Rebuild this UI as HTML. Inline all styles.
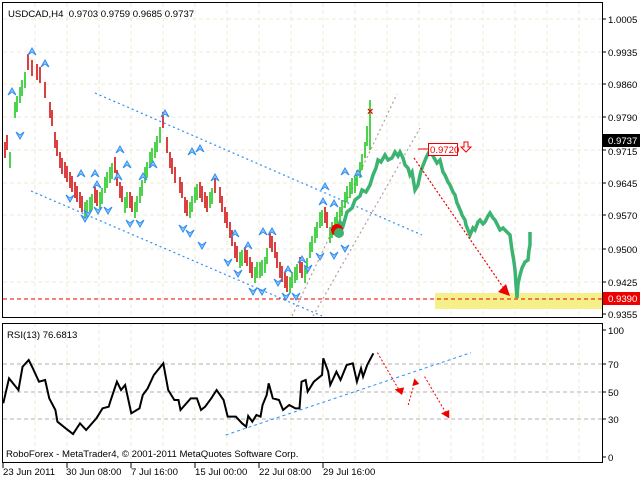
<!DOCTYPE html>
<html><head><style>
body{margin:0;background:#fff;width:640px;height:480px;overflow:hidden;font-family:"Liberation Sans",sans-serif}
svg{position:absolute;left:0;top:0}
text{font-family:"Liberation Sans",sans-serif;font-size:9.6px;fill:#000}
</style></head><body>
<svg width="640" height="480" viewBox="0 0 640 480">
<defs>
<g id="u"><path d="M-4,5 L0,-2 L4,5 L0,2Z" fill="#9cc9ff" stroke="#2f8df0" stroke-width="1"/></g>
<g id="d"><path d="M-4,-5 L0,2 L4,-5 L0,-2Z" fill="#9cc9ff" stroke="#2f8df0" stroke-width="1"/></g>
</defs>
<g stroke="#ecebd6" stroke-dasharray="4,3" stroke-width="1">
<path d="M35 3V317M67 3V317M99 3V317M131 3V317M163 3V317M195 3V317M227 3V317M259 3V317M291 3V317M323 3V317M355 3V317M387 3V317M419 3V317M451 3V317M483 3V317M515 3V317M547 3V317M579 3V317"/>
<path d="M3 19H602M3 52H602M3 84H602M3 117H602M3 150H602M3 183H602M3 215H602M3 249H602M3 282H602"/>
<path d="M35 323V462M67 323V462M99 323V462M131 323V462M163 323V462M195 323V462M227 323V462M259 323V462M291 323V462M323 323V462M355 323V462M387 323V462M419 323V462M451 323V462M483 323V462M515 323V462M547 323V462M579 323V462"/>
</g>
<g stroke="#b0b0b0" stroke-dasharray="4,3"><path d="M3 364H602M3 392H602M3 419H602"/></g>
<rect x="435" y="293" width="167" height="16" fill="#f5f08a"/>
<path d="M3 299H602" stroke="#e00" stroke-dasharray="4,3"/>
<g stroke="#2f8df0" stroke-dasharray="2,3" stroke-width="1.2" fill="none">
<path d="M95 93L422 235"/><path d="M31 191L322 316"/>
</g>
<g stroke="#b89a9a" stroke-dasharray="2,3" stroke-width="1.2" fill="none">
<path d="M292 316L397 94"/><path d="M313 316L420 128"/>
</g>
<path stroke="#d41010" stroke-width="1.6" d="M5 142V158M28 54V70M32 60V76M40 67V83M45 82V98M50 102V118M55 132V148M60 152V168M65 162V178M70 172V188M75 182V198M80 192V208M95 187V203M115 157V173M120 182V198M130 192V208M163 112V128M167 137V153M170 152V168M175 167V183M180 177V193M185 197V213M200 182V198M205 192V208M215 177V193M220 187V203M225 207V223M230 222V238M235 242V258M245 247V263M250 257V273M270 232V248M275 242V258M280 262V278M285 272V288M300 257V273M325 207V223 M7 135V150M37 64V80M52 110V126M62 158V174M72 176V192M82 196V212M122 186V202M172 158V174M182 182V198M227 212V228M237 246V262M252 262V278M282 266V282M57 140V156M67 166V182M77 186V202M97 190V206M117 170V186M132 196V212M187 200V216M202 186V202M207 196V212M222 196V212M232 230V246M247 250V266M272 236V252M277 252V268M287 276V292M302 262V278M327 212V228"/>
<path stroke="#22c822" stroke-width="1.6" d="M10 152V168M15 102V118M20 87V103M25 72V88M85 202V218M90 197V213M100 192V208M105 177V193M110 167V183M125 197V213M135 202V218M140 187V203M145 167V183M150 152V168M155 142V158M160 127V143M190 202V218M195 187V203M210 192V208M240 252V268M255 267V283M260 262V278M265 257V273M290 277V293M295 267V283M305 267V283M310 242V258M315 227V243M320 212V228M330 227V243M335 217V233M340 207V223M345 192V208M350 182V198M355 177V193M360 162V178M365 142V158M370 100V150M17 96V112M22 80V96M92 194V210M102 188V204M107 172V188M112 163V179M142 180V196M147 162V178M152 148V164M157 136V152M192 196V212M262 260V276M297 264V280M312 236V252M317 222V238M337 212V228M342 200V216M352 178V194M362 154V170M87 200V216M127 192V208M137 196V212M197 184V200M212 188V204M242 250V266M257 262V278M267 248V264M292 272V288M307 258V274M322 210V226M332 222V238M347 186V202M357 170V186M367 126V146"/>
<polyline fill="none" stroke="#3cb371" stroke-width="3.5" stroke-linejoin="miter" points="335,232 340,222 343,226 347,212 352,208 355,200 360,196 362,190 366,192 370,185 373,175 376,168 378,160 381,162 385,155 388,160 392,158 395,152 398,156 400,152 403,158 405,165 408,168 410,175 412,172 415,190 418,185 420,175 422,168 426,158 430,150 433,156 437,163 440,160 443,172 445,175 448,182 450,185 453,192 455,195 457,203 458,205 461,212 462,215 465,220 466,225 468,230 470,235 473,228 475,230 478,222 480,220 483,224 485,222 488,216 490,213 493,218 495,220 498,226 500,230 503,228 505,230 508,233 510,235 511,243 512,250 514,262 515,270 516,285 517,298 518,284 520,275 522,268 525,262 528,260 529,250 530,245 530,232"/>
<circle cx="337" cy="230" r="6" fill="#e00"/><circle cx="339" cy="233" r="5" fill="#3cb371"/>
<path d="M414 158L505 290" stroke="#e00" stroke-dasharray="2,2" stroke-width="1.2"/>
<path d="M510 296L498 292L506 284Z" fill="#e00"/>
<text x="367" y="115" style="fill:#e00;font-weight:bold;font-size:11px">×</text>
<path d="M418 149H428" stroke="#e00"/>
<rect x="428.5" y="143.5" width="29" height="12" fill="#fff" stroke="#e00"/>
<text x="430" y="153" style="fill:#e00">0.9720</text>
<path d="M464 142h4v5h3l-5,5l-5,-5h3z" fill="#fff" stroke="#e00"/>
<g>
<use href="#u" x="32" y="50"/><use href="#u" x="45" y="62"/><use href="#u" x="12" y="90"/><use href="#u" x="165" y="112"/><use href="#u" x="120" y="148"/><use href="#u" x="127" y="163"/><use href="#u" x="153" y="163"/><use href="#u" x="118" y="175"/><use href="#u" x="95" y="172"/><use href="#u" x="143" y="175"/><use href="#u" x="200" y="147"/><use href="#u" x="192" y="150"/><use href="#u" x="215" y="176"/><use href="#u" x="235" y="232"/><use href="#u" x="263" y="230"/><use href="#u" x="272" y="230"/><use href="#u" x="248" y="244"/><use href="#u" x="302" y="258"/><use href="#u" x="288" y="268"/><use href="#u" x="325" y="185"/><use href="#u" x="323" y="200"/><use href="#u" x="345" y="170"/><use href="#u" x="358" y="172"/><use href="#u" x="334" y="202"/><use href="#u" x="81" y="172"/><use href="#u" x="97" y="183"/>
<use href="#d" x="20" y="137"/><use href="#d" x="70" y="200"/><use href="#d" x="85" y="220"/><use href="#d" x="98" y="212"/><use href="#d" x="108" y="212"/><use href="#d" x="130" y="225"/><use href="#d" x="140" y="225"/><use href="#d" x="183" y="230"/><use href="#d" x="190" y="235"/><use href="#d" x="202" y="247"/><use href="#d" x="228" y="264"/><use href="#d" x="238" y="275"/><use href="#d" x="253" y="293"/><use href="#d" x="262" y="293"/><use href="#d" x="278" y="284"/><use href="#d" x="286" y="298"/><use href="#d" x="296" y="298"/><use href="#d" x="308" y="270"/><use href="#d" x="320" y="258"/><use href="#d" x="334" y="257"/><use href="#d" x="345" y="250"/><use href="#d" x="88" y="215"/>
</g>
<g transform="translate(0,310) scale(0.41026,0.33333)" fill="none">
<polyline stroke="#000" stroke-width="2" vector-effect="non-scaling-stroke" points="8,280 22,205 35,225 45,240 55,170 70,150 80,175 95,215 110,210 120,265 135,300 140,335 160,355 178,372 195,340 210,360 235,325 250,295 265,290 270,270 285,215 295,240 305,225 320,310 340,295 348,255 360,235 375,195 398,160 410,240 425,270 435,270 440,300 465,265 480,265 490,300 500,290 515,265 528,240 545,270 555,320 575,320 590,340 600,350 605,318 615,335 625,315 635,320 640,285 650,255 655,220 665,265 680,270 690,300 705,285 720,295 730,295 735,215 745,210 750,245 765,215 775,205 785,195 788,145 800,185 805,225 820,185 830,210 845,165 860,160 870,215 880,175 885,200 895,165 910,130"/>
<path d="M550 375L1148 128" stroke="#2f8df0" stroke-dasharray="3,3" vector-effect="non-scaling-stroke"/>
<path d="M920 128L975 245M995 285L1010 220M1035 200L1090 315" stroke="#e00" stroke-dasharray="2,2" vector-effect="non-scaling-stroke"/>
<path d="M980 255L962 238L985 232Z M1010 205L1005 228L1022 222Z M1095 325L1075 310L1095 300Z" fill="#e00"/>
</g>
<g stroke="#000" fill="none" stroke-width="1">
<rect x="2.5" y="2.5" width="600" height="315"/>
<rect x="2.5" y="323.5" width="600" height="139"/>
<path d="M602 19h4M602 52h4M602 84h4M602 117h4M602 150h4M602 183h4M602 215h4M602 249h4M602 282h4M602 314h4M602 330h4M602 364h4M602 392h4M602 419h4M602 457h4M3 463v5M67 463v5M131 463v5M195 463v5M259 463v5M323 463v5"/>
</g>
<text x="8" y="17">USDCAD,H4 &#160;0.9703 0.9759 0.9685 0.9737</text>
<g>
<text x="608" y="23">1.0005</text><text x="608" y="56">0.9935</text><text x="608" y="88">0.9860</text><text x="608" y="121">0.9790</text><text x="608" y="155">0.9715</text><text x="608" y="187">0.9645</text><text x="608" y="219">0.9570</text><text x="608" y="253">0.9500</text><text x="608" y="286">0.9425</text><text x="608" y="318">0.9355</text>
</g>
<rect x="603" y="134" width="37" height="13" fill="#000"/><text x="608" y="144" style="fill:#fff">0.9737</text>
<rect x="603" y="292" width="37" height="13" fill="#e00"/><text x="608" y="302" style="fill:#fff">0.9390</text>
<text x="608" y="334">100</text><text x="608" y="368">70</text><text x="608" y="396">50</text><text x="608" y="423">30</text><text x="608" y="461">0</text>
<text x="7" y="338">RSI(13) 76.6813</text>
<text x="6" y="457">RoboForex - MetaTrader4, © 2001-2011 MetaQuotes Software Corp.</text>
<g><text x="3" y="475">23 Jun 2011</text><text x="66" y="475">30 Jun 08:00</text><text x="131" y="475">7 Jul 16:00</text><text x="195" y="475">15 Jul 00:00</text><text x="259" y="475">22 Jul 08:00</text><text x="323" y="475">29 Jul 16:00</text></g>
</svg>
</body></html>
